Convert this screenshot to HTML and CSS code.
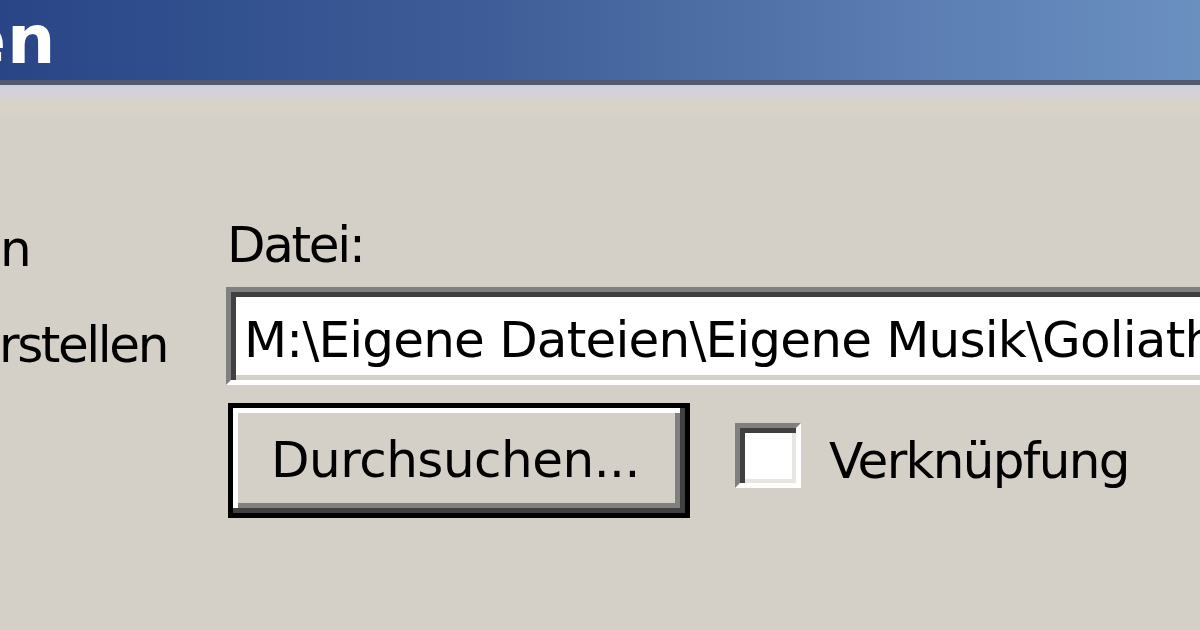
FILE: index.html
```html
<!DOCTYPE html>
<html lang="de">
<head>
<meta charset="utf-8">
<title>Datei</title>
<link rel="stylesheet" href="styles.css">
</head>
<body>
<div class="window">
  <div class="titlebar"><span class="title">en</span></div>
  <div class="band"></div>
  <div class="content">
    <div class="left">
      <div class="opt opt1">n</div>
      <div class="opt opt2">rstellen</div>
    </div>
    <div class="right">
      <div class="label">Datei:</div>
      <div class="textbox">M:\Eigene Dateien\Eigene Musik\Goliath</div>
      <div class="row">
        <div class="button">Durchsuchen...</div>
        <div class="check">
          <span class="box"></span>
          <span class="check-label">Verknüpfung</span>
        </div>
      </div>
    </div>
  </div>
</div>
</body>
</html>
```
FILE: styles.css
```css
html, body {
  margin: 0;
  padding: 0;
}
body {
  width: 1200px;
  height: 630px;
  overflow: hidden;
  background: #d4d0c8;
  font-family: "DejaVu Sans", "Liberation Sans", sans-serif;
  color: #000;
}
.window {
  width: 1200px;
  height: 630px;
  overflow: hidden;
}
.titlebar {
  height: 80px;
  border-bottom: 5px solid #535a70;
  background: linear-gradient(90deg, #2a4586 0%, #31508e 18%, #3e5d98 40%, #4a6aa2 55%, #5a7cb2 75%, #6a90c0 100%);
  overflow: hidden;
  white-space: nowrap;
}
.title {
  display: block;
  margin-left: -40px;
  font-weight: bold;
  font-size: 68px;
  line-height: 80px;
  color: #fff;
  letter-spacing: 1px;
}
.band {
  height: 33px;
  background: linear-gradient(180deg, #d0d1d9 0%, #d3d2d8 30%, #dad2c6 60%, #d8d1c6 85%, #d4d0c8 100%);
}
.content {
  display: flex;
  font-size: 50px;
  line-height: 60px;
}
.left {
  width: 226px;
  flex: none;
  padding-top: 101px;
  white-space: nowrap;
}
.opt1 {
  margin-left: 0;
}
.opt2 {
  margin-top: 36px;
  margin-left: -1px;
  letter-spacing: -2.4px;
}
.right {
  flex: none;
  width: 1000px;
  padding-top: 97px;
}
.label {
  margin-left: 1px;
  letter-spacing: -2.3px;
}
.textbox {
  box-sizing: border-box;
  margin-top: 12px;
  width: 1000px;
  height: 98px;
  padding: 18px 0 0 13px;
  background: #fff;
  border: 5px solid;
  border-color: #808080 #fff #fff #808080;
  box-shadow: inset 5px 5px 0 #404040, inset -5px -5px 0 #d4d0c8;
  white-space: nowrap;
  overflow: hidden;
  letter-spacing: -0.8px;
}
.row {
  display: flex;
  align-items: flex-start;
  margin-top: 18px;
}
.button {
  box-sizing: border-box;
  margin-left: 2px;
  width: 462px;
  height: 115px;
  border: 5px solid #000;
  background: #d4d0c8;
  box-shadow: inset -5px -5px 0 #404040, inset 5px 5px 0 #fff, inset -10px -10px 0 #808080;
  padding-left: 38px;
  line-height: 105px;
  letter-spacing: -0.5px;
  white-space: nowrap;
}
.check {
  display: flex;
  align-items: flex-start;
  margin-left: 45px;
}
.box {
  box-sizing: border-box;
  display: block;
  margin-top: 20px;
  width: 66px;
  height: 65px;
  background: #fff;
  border: 5px solid;
  border-color: #808080 #fff #fff #808080;
  box-shadow: inset 5px 5px 0 #404040, inset -4px -4px 0 #e8e6e0;
}
.check-label {
  display: block;
  margin-top: 28px;
  margin-left: 28px;
  letter-spacing: -1.7px;
  white-space: nowrap;
}
```
